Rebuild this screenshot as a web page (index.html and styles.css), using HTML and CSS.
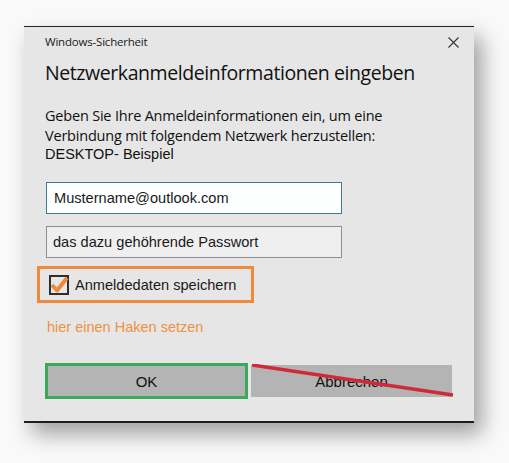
FILE: index.html
```html
<!DOCTYPE html>
<html lang="de">
<head>
<meta charset="utf-8">
<title>Windows-Sicherheit</title>
<link rel="stylesheet" href="styles.css">
</head>
<body>
<div class="dialog">
  <div class="titlebar">
    <span class="app">Windows-Sicherheit</span>
    <svg class="close" width="11" height="11" viewBox="0 0 11 11"><path d="M0.5 0.5 L10.5 10.5 M10.5 0.5 L0.5 10.5" stroke="#333" stroke-width="1.1" fill="none"/></svg>
  </div>
  <h1 class="heading">Netzwerkanmeldeinformationen eingeben</h1>
  <div class="intro">
    <p class="intro-text">Geben Sie Ihre Anmeldeinformationen ein, um eine<br>Verbindung mit folgendem Netzwerk herzustellen:</p>
    <p class="host">DESKTOP- Beispiel</p>
  </div>
  <div class="field field-user">Mustername@outlook.com</div>
  <div class="field field-pass">das dazu gehöhrende Passwort</div>
  <div class="remember">
    <svg class="check" width="20" height="20" viewBox="0 0 20 20">
      <rect x="1" y="1" width="18" height="18" fill="none" stroke="#2d2d2d" stroke-width="2"/>
      <path d="M3 10 L8 15.5 L18 3" stroke="#f0883a" stroke-width="4" fill="none" stroke-linejoin="round"/>
    </svg>
    <span>Anmeldedaten speichern</span>
  </div>
  <div class="hint">hier einen Haken setzen</div>
  <div class="buttons">
    <div class="btn btn-ok">OK</div>
    <div class="btn btn-cancel">Abbrechen
      <svg class="strike" width="202" height="34" viewBox="0 0 202 34"><line x1="0" y1="1" x2="201" y2="31" stroke="#cf2a3a" stroke-width="3.5"/></svg>
    </div>
  </div>
</div>
</body>
</html>
```
FILE: styles.css
```css
html, body {
  margin: 0;
  padding: 0;
  background: #f9f9f9;
}
body {
  width: 509px;
  height: 463px;
  overflow: hidden;
  font-family: "Liberation Sans", Arial, sans-serif;
  color: #1a1a1a;
}
.dialog {
  box-sizing: border-box;
  width: 450px;
  height: 397px;
  margin: 26px 0 0 24px;
  background: #e6e6e6;
  border-top: 1px solid #222;
  border-bottom: 2px solid #1d1d1d;
  box-shadow: 8px 11px 20px rgba(0, 0, 0, 0.36);
  padding: 0 15px 0 21px;
}
.titlebar {
  display: flex;
  justify-content: space-between;
  align-items: center;
  padding-top: 7px;
  height: 16px;
}
.app {
  font-family: "Open Sans", "Noto Sans", sans-serif;
  font-size: 11.5px;
  line-height: 16px;
  color: #1a1a1a;
  letter-spacing: -0.2px;
}
.close {
  display: block;
}
.heading {
  margin: 10px 0 0;
  font-family: "Open Sans", "Noto Sans", sans-serif;
  font-weight: normal;
  font-size: 19.5px;
  line-height: 26px;
  color: #111;
  letter-spacing: -0.42px;
}
.intro {
  margin-top: 20px;
  color: #111;
}
.intro-text {
  margin: 0;
  font-family: "Open Sans", "Noto Sans", sans-serif;
  font-size: 14.5px;
  line-height: 20px;
  letter-spacing: -0.2px;
}
.host {
  margin: 0;
  font-size: 14.5px;
  line-height: 17px;
}
.field {
  box-sizing: border-box;
  width: 296px;
  height: 32px;
  margin-left: 1px;
  font-size: 14.6px;
  line-height: 30px;
  padding-left: 7px;
}
.field-user {
  margin-top: 19px;
  background: #fdfefe;
  border: 1px solid #3f7890;
}
.field-pass {
  margin-top: 12px;
  background: #efefef;
  border: 1px solid #8e8e8e;
  padding-left: 6px;
}
.remember {
  box-sizing: border-box;
  display: flex;
  align-items: center;
  gap: 6px;
  width: 217px;
  height: 37px;
  margin: 8px 0 0 -8px;
  padding-left: 8px;
  border: 3px solid #ef8a3c;
  font-size: 14.6px;
}
.check {
  display: block;
  margin-left: 1px;
}
.hint {
  margin-top: 15px;
  margin-left: 2px;
  font-size: 14.5px;
  line-height: 18px;
  color: #f0913f;
}
.buttons {
  display: flex;
  align-items: center;
  gap: 3px;
  margin-top: 27px;
}
.btn {
  box-sizing: border-box;
  display: flex;
  align-items: center;
  justify-content: center;
  background: #b4b4b4;
  font-size: 15px;
  color: #111;
}
.btn-ok {
  width: 203px;
  height: 36px;
  border: 3px solid #3aa95a;
}
.btn-cancel {
  position: relative;
  width: 201px;
  height: 32px;
}
.strike {
  position: absolute;
  left: 1px;
  top: -1px;
}
```
